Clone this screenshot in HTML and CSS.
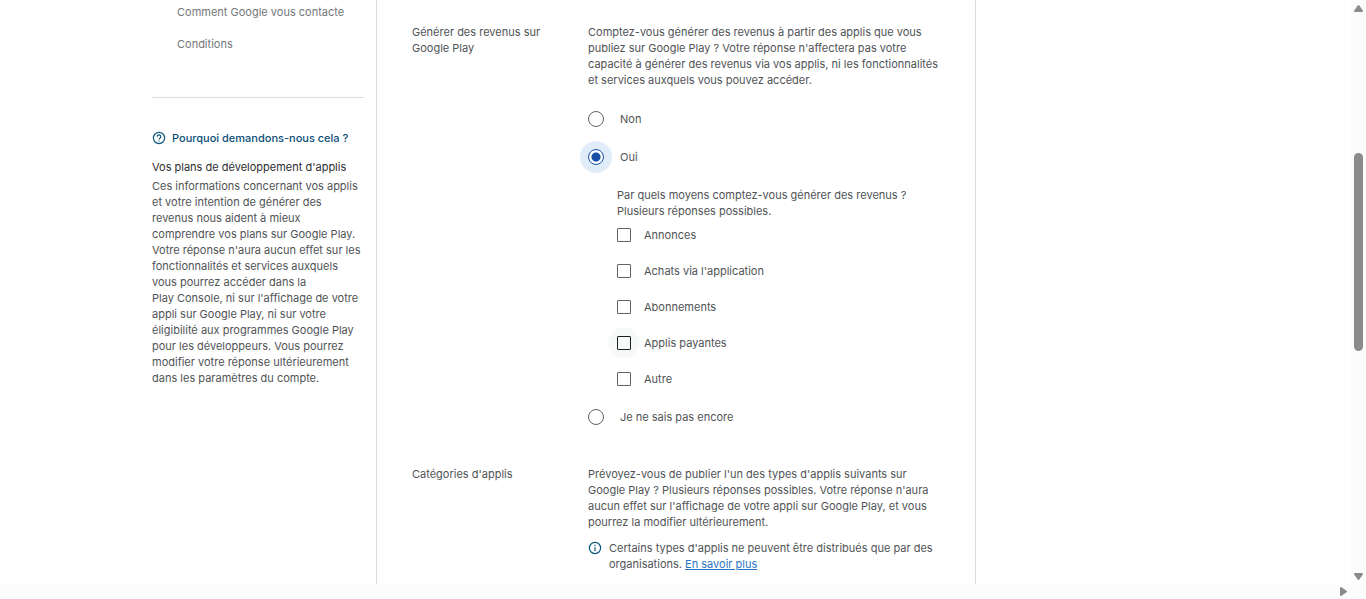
FILE: index.html
```html
<!DOCTYPE html>
<html lang="fr">
<head>
  <meta charset="UTF-8">
  <meta name="viewport" content="width=device-width, initial-scale=1.0">
  <title>Play Console</title>
  <link rel="stylesheet" href="styles.css">
</head>
<body>
  <div class="viewport">
    <div class="page">
      <aside class="sidebar">
        <nav class="steps">
          <a href="#contact">Comment Google vous contacte</a>
          <a href="#conditions">Conditions</a>
        </nav>
        <hr class="divider">
        <h2 class="help-title">
          <svg class="icon" viewBox="0 0 14 14" aria-hidden="true">
            <circle cx="7" cy="7" r="5.6"/>
            <path d="M5.2 5.7a1.8 1.8 0 1 1 2.7 1.5C7.2 7.6 7 7.8 7 8.5"/>
            <path d="M7 9.4v1.2"/>
          </svg>
          Pourquoi demandons-nous cela&nbsp;?
        </h2>
        <h3 class="help-subtitle">Vos plans de développement d'applis</h3>
        <p class="help-text">
          Ces informations concernant vos applis<br>
          et votre intention de générer des<br>
          revenus nous aident à mieux<br>
          comprendre vos plans sur Google&nbsp;Play.<br>
          Votre réponse n'aura aucun effet sur les<br>
          fonctionnalités et services auxquels<br>
          vous pourrez accéder dans la<br>
          Play&nbsp;Console, ni sur l'affichage de votre<br>
          appli sur Google&nbsp;Play, ni sur votre<br>
          éligibilité aux programmes Google&nbsp;Play<br>
          pour les développeurs. Vous pourrez<br>
          modifier votre réponse ultérieurement<br>
          dans les paramètres du compte.
        </p>
      </aside>

      <main class="form">
        <section class="question">
          <h2 class="question-title">Générer des revenus sur<br>Google&nbsp;Play</h2>
          <div class="question-body">
            <p>
              Comptez-vous générer des revenus à partir des applis que vous<br>
              publiez sur Google&nbsp;Play&nbsp;? Votre réponse n'affectera pas votre<br>
              capacité à générer des revenus via vos applis, ni les fonctionnalités<br>
              et services auxquels vous pouvez accéder.
            </p>
            <div class="radios">
              <label class="radio"><input type="radio" name="revenus"> Non</label>
              <label class="radio"><input type="radio" name="revenus" checked> Oui</label>
              <div class="sub-question">
                <p>
                  Par quels moyens comptez-vous générer des revenus&nbsp;?<br>
                  Plusieurs réponses possibles.
                </p>
                <div class="checks">
                  <label class="check"><input type="checkbox"> Annonces</label>
                  <label class="check"><input type="checkbox"> Achats via l'application</label>
                  <label class="check"><input type="checkbox"> Abonnements</label>
                  <label class="check active"><input type="checkbox"> Applis payantes</label>
                  <label class="check"><input type="checkbox"> Autre</label>
                </div>
              </div>
              <label class="radio"><input type="radio" name="revenus"> Je ne sais pas encore</label>
            </div>
          </div>
        </section>

        <section class="question">
          <h2 class="question-title">Catégories d'applis</h2>
          <div class="question-body">
            <p>
              Prévoyez-vous de publier l'un des types d'applis suivants sur<br>
              Google&nbsp;Play&nbsp;? Plusieurs réponses possibles. Votre réponse n'aura<br>
              aucun effet sur l'affichage de votre appli sur Google&nbsp;Play, et vous<br>
              pourrez la modifier ultérieurement.
            </p>
            <div class="note">
              <svg class="icon" viewBox="0 0 14 14" aria-hidden="true">
                <circle cx="7" cy="7" r="5.6"/>
                <path d="M7 6.2v4M7 3.8v1.3"/>
              </svg>
              <p>
                Certains types d'applis ne peuvent être distribués que par des<br>
                organisations. <a href="#savoir-plus">En savoir plus</a>
              </p>
            </div>
          </div>
        </section>
      </main>
    </div>

    <div class="scroll-y" aria-hidden="true">
      <svg class="arrow" viewBox="0 0 15 15"><path d="M7.5 6l3.500 5h-7z"/></svg>
      <div class="track"><div class="thumb"></div></div>
      <svg class="arrow" viewBox="0 0 15 15"><path d="M7.500 10l3.500-5h-7z"/></svg>
    </div>
    <div class="scroll-x" aria-hidden="true">
      <svg class="arrow" viewBox="0 0 15 15"><path d="M10 7.500l-5-3.500v7z"/></svg>
    </div>
    <div class="corner"></div>
  </div>
</body>
</html>
```

FILE: styles.css
```css
* { box-sizing: border-box; }
body { margin: 0; font-family: Inter, "Open Sans", sans-serif; font-size: 11px; line-height: 16px; color: #505356; background: #fff; }
h2, h3, p { margin: 0; font-size: inherit; font-weight: 400; white-space: nowrap; }
a { color: #2a74c4; }

.viewport { display: grid; grid-template-columns: 1fr 15px; grid-template-rows: 1fr 15px; height: 100vh; overflow: hidden; }
.page { display: grid; grid-template-columns: 212px minmax(0, 600px); column-gap: 12px; padding-left: 152px; min-height: 0; overflow: hidden; }

/* left column */
.sidebar { padding-top: 4px; }
.steps { display: flex; flex-direction: column; gap: 16px; padding-left: 25px; }
.steps a { color: #74777a; text-decoration: none; }
.divider { height: 1px; margin: 45px 0 32px; border: 0; background: #dadce0; }
.help-title { display: flex; align-items: center; gap: 6px; font-weight: 500; color: #0b4f78; }
.help-subtitle { margin-top: 13px; color: #2c2e31; }
.help-text { margin-top: 3px; }
.icon { flex: none; width: 14px; height: 14px; fill: none; stroke: #0b5679; stroke-width: 1.2; }

/* form */
.form { display: flex; flex-direction: column; gap: 33px; padding: 24px 35px 0; border: solid #dadce0; border-width: 0 1px; }
.question { display: grid; grid-template-columns: 176px 1fr; }
.radios { display: flex; flex-direction: column; gap: 6px; margin-top: 15px; }
.radio, .check { display: flex; align-items: center; height: 32px; }
.radio { gap: 16px; }
.check { gap: 13px; margin-left: -16px; padding-left: 16px; }
.check.active { background: radial-gradient(circle at 23px 50%, #f7f9f9 15px, transparent 16px); }
input { appearance: none; flex: none; margin: 0; border: 1px solid #5f6368; background: #fff; }
input[type="radio"] { width: 16px; height: 16px; border-radius: 50%; }
input[type="radio"]:checked { border-color: #174ea6; background: radial-gradient(circle, #174ea6 4px, #f4f8fd 5px); box-shadow: 0 0 0 8px #e1ecf9; }
input[type="checkbox"] { width: 14px; height: 14px; border-radius: 1px; }
.active input[type="checkbox"] { border-color: #202124; background: transparent; }
.sub-question { padding: 8px 0 0 29px; }
.checks { display: flex; flex-direction: column; gap: 4px; }
.note { display: flex; gap: 7px; margin-top: 10px; }
.note .icon { margin-top: 1px; }

/* scrollbars */
.scroll-y { display: flex; flex-direction: column; background: #fcfcfc; }
.track { display: grid; grid-template-rows: 138fr 198fr 218fr; flex: 1; padding: 0 3px; }
.thumb { grid-row: 2; border-radius: 5px; background: #8b8b8b; }
.scroll-x { display: flex; justify-content: flex-end; background: #fcfcfc; }
.arrow { width: 15px; height: 15px; fill: #8b8b8b; stroke: #8b8b8b; stroke-width: 2; stroke-linejoin: round; }
.corner { background: #fcfcfc; }
```
